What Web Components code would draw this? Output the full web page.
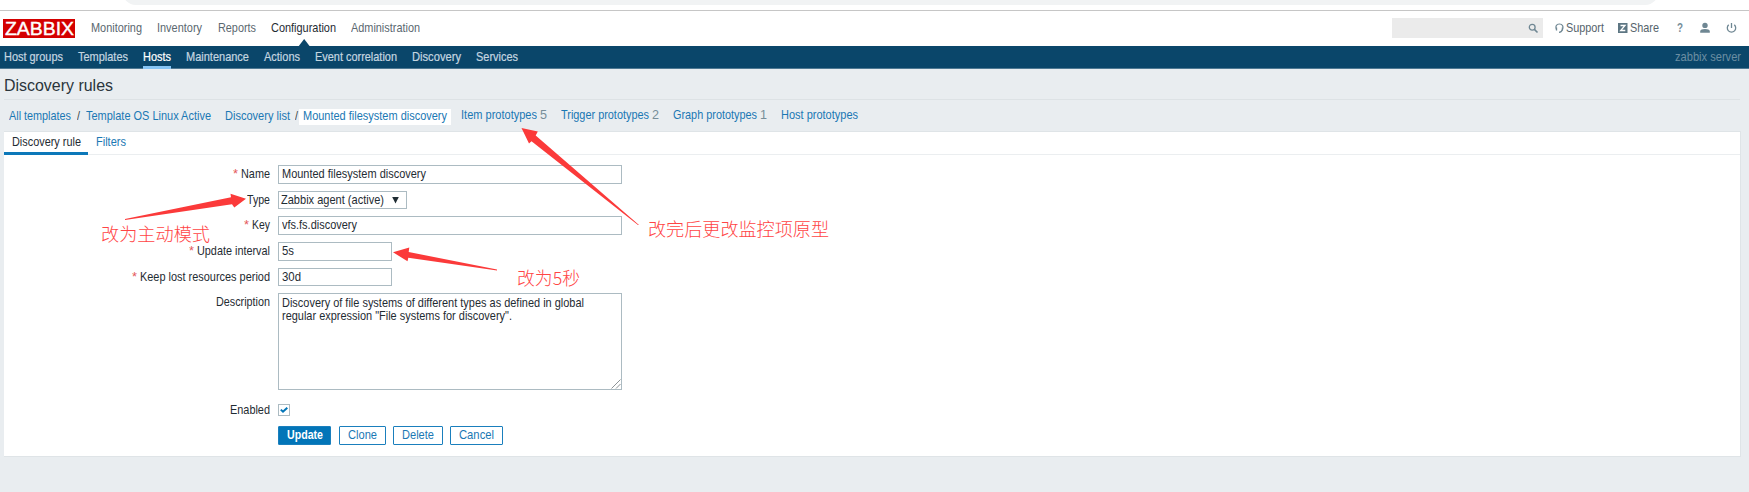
<!DOCTYPE html>
<html lang="en">
<head>
<meta charset="utf-8">
<title>Configuration of discovery rules</title>
<style>
html,body{margin:0;padding:0}
body{width:1749px;height:492px;overflow:hidden;background:#e9edf0;font:12.2px/16px "Liberation Sans",Arial,sans-serif;color:#1f2c33}
</style>
</head>
<body>
<zbx-app></zbx-app>
<script>
/* Single line of text set to an exact measure: w = width, gap = space before it. */
class ZText extends HTMLElement{
  constructor(){
    super();
    this.attachShadow({mode:'open'}).innerHTML='<style>:host{display:block;flex:none;white-space:pre}span{display:inline-block;transform-origin:0 50%}</style><span><slot></slot></span>';
  }
  connectedCallback(){
    const w=+this.getAttribute('w'),s=this.shadowRoot.querySelector('span');
    this.style.marginLeft=(this.getAttribute('gap')||0)+'px';
    if(!w)return;
    s.style.transform='scaleX('+(w/s.getBoundingClientRect().width)+')';
    this.style.width=w+'px';
  }
}
const define=(name,html)=>customElements.define(name,class extends HTMLElement{
  constructor(){super();this.attachShadow({mode:'open'}).innerHTML=html}
});

const registerAll=()=>{
define('zbx-browser-edge',`<style>
:host{display:flow-root;height:10px;background:#fff;border-bottom:1px solid #c6c6c6;overflow:hidden}
div{margin:-20px 91px 0 123px;height:25px;border-radius:13px;background:#f1f3f4}
</style><div></div>`);

define('zbx-header',`<style>
:host{display:flex;height:35px;background:#fff;color:#5b6870;align-items:flex-start}
.logo{margin:8px 0 0 3px;width:72px;height:19px;background:#d40000;color:#fff;font:18.5px/20px "Liberation Sans",Arial,sans-serif;-webkit-text-stroke:.4px #fff}
nav,.tools{display:flex;padding-top:8px;line-height:18px}
.on{color:#1f2c33;position:relative}
.on i{position:absolute;left:31px;top:20px;border:6.5px solid transparent;border-top:0;border-bottom:7px solid #0a466a}
.search{margin:7px 12px 0 auto;width:151px;height:20px;background:#ebebeb;display:flex;align-items:center;justify-content:flex-end}
.search svg{margin-right:4px}
.tools{width:194px;color:#56646c}
svg{display:block;flex:none}
.q{color:#768d99;font-weight:bold}
</style>
<div class="logo"><z-text w="69" gap="2">ZABBIX</z-text></div>
<nav><z-text w="51" gap="16">Monitoring</z-text><z-text w="45" gap="15">Inventory</z-text><z-text w="38" gap="16">Reports</z-text><z-text class="on" w="65" gap="15">Configuration<i></i></z-text><z-text w="69" gap="15">Administration</z-text></nav>
<div class="search"><svg width="11" height="11" viewBox="0 0 11 11" fill="none" stroke="#6f8793" stroke-width="1.3"><circle cx="4.2" cy="4.2" r="2.900"/><path d="M6.4 6.4 9.500 9.500" stroke-width="1.6"/></svg></div>
<div class="tools">
<svg width="9" height="18" viewBox="0 0 9 18" fill="none" stroke="#6f8793" stroke-width="1.2"><path d="M1.6 10.8C.2 8 1.1 5 4.4 5S8.700 8 7.300 10.800Q6.500 13.300 4 13.300"/><path d="M1.500 8.500V11.500M7.400 8.500V11.500" stroke-width="1.300"/></svg>
<z-text w="38" gap="2">Support</z-text>
<svg style="margin-left:14px" width="10" height="18" viewBox="0 0 10 18"><path fill="#5d7683" d="M0 4h9.500v10H0z"/><path d="M2.500 6.500H7L2.700 11.500H7.300" fill="none" stroke="#fff" stroke-width="1.300"/></svg>
<z-text w="29" gap="2">Share</z-text>
<z-text class="q" w="6" gap="18">?</z-text>
<svg style="margin-left:17px" width="10" height="18" viewBox="0 0 10 18" fill="#6f8793"><circle cx="5" cy="6.400" r="2.700"/><path d="M.2 13.700V12Q.6 10 5 10t4.800 2v1.700z"/></svg>
<svg style="margin-left:16px" width="11" height="18" viewBox="0 0 11 18" fill="none" stroke="#6f8793" stroke-width="1.300"><path d="M2.700 5.800a4.200 4.200 0 1 0 5.600 0M5.500 4v5"/></svg>
</div>`);

define('zbx-subnav',`<style>
:host{display:flex;height:22px;background:#0a466a;border-bottom:1px solid #4f7993;color:#c5d6e0;line-height:22px}
.on{color:#fff;height:20px;border-bottom:3px solid #86c5f5}
.srv{margin-left:auto;margin-right:8px;color:#6b8ea3}
z-text{-webkit-text-stroke:.2px currentColor}.srv z-text{-webkit-text-stroke:0}
</style>
<z-text w="59" gap="4">Host groups</z-text><z-text w="50" gap="15">Templates</z-text><z-text class="on" w="28" gap="15">Hosts</z-text><z-text w="63" gap="15">Maintenance</z-text><z-text w="36" gap="15">Actions</z-text><z-text w="82" gap="15">Event correlation</z-text><z-text w="49" gap="15">Discovery</z-text><z-text w="42" gap="15">Services</z-text>
<div class="srv"><z-text w="66">zabbix server</z-text></div>`);

define('zbx-title',`<style>
:host{display:block;margin:0 9px 0 4px;height:30px;border-bottom:1px solid #dde2e5;font-size:16.500px;line-height:32px;color:#2b353b}
</style><z-text w="109">Discovery rules</z-text>`);

define('zbx-crumbs',`<style>
:host{display:flex;height:31px;padding-top:8px;box-sizing:border-box;line-height:17px;color:#1a78b4}
.s{color:#3a444a}
.cur{background:#fff;width:152px;height:16px;margin:1px 0 0 1px;line-height:15px}
.up{display:flex;line-height:15px}
.n{color:#768d99}
</style>
<z-text w="62" gap="9">All templates</z-text><z-text class="s" w="3" gap="6">/</z-text><z-text w="125" gap="6">Template OS Linux Active</z-text><z-text w="65" gap="14">Discovery list</z-text><z-text class="s" w="3" gap="5">/</z-text>
<div class="cur"><z-text w="144" gap="4">Mounted filesystem discovery</z-text></div>
<div class="up"><z-text w="76" gap="10">Item prototypes</z-text><z-text class="n" w="7" gap="3">5</z-text><z-text w="88" gap="14">Trigger prototypes</z-text><z-text class="n" w="7" gap="3">2</z-text><z-text w="84" gap="14">Graph prototypes</z-text><z-text class="n" w="7" gap="3">1</z-text><z-text w="77" gap="14">Host prototypes</z-text></div>`);

define('zbx-tabs',`<style>
:host{display:flex;height:22px;border-bottom:1px solid #ebeef0;line-height:20px;color:#1a78b4}
.on{width:84px;height:20px;border-bottom:3px solid #0c78b9;color:#1f2c33}
</style><div class="on"><z-text w="69" gap="8">Discovery rule</z-text></div><z-text w="30" gap="8">Filters</z-text>`);

define('zbx-row',`<style>
:host{display:flex;height:18.600px;line-height:18px}
.l{width:266px;display:flex;justify-content:flex-end;margin-right:8px}
</style><div class="l"><slot name="label"></slot></div><slot></slot>`);

define('zbx-field',`<style>
:host{display:flex;box-sizing:border-box;width:344px;height:18.600px;border:1px solid #acbbc2;line-height:16px;background:#fff;padding-left:3px;position:relative}
:host([short]){width:114px}
:host([select]){width:129px;padding-left:2px}
:host([area]){display:block;height:97px;line-height:13px;padding-top:3px}
</style><slot></slot>`);

define('zbx-button',`<style>
:host{display:flex;justify-content:center;box-sizing:border-box;height:19px;border:1px solid #1a7fbd;border-radius:1px;line-height:17px;color:#1a78b4;background:#fff}
:host([main]){background:#0275b8;color:#fff;font-weight:bold}
</style><slot></slot>`);

define('zbx-form',`<style>
:host{display:flex;flex-direction:column;gap:7px;padding-top:10.300px}
.r{color:#e45959}
zbx-row[tall]{height:97px}
.grip{position:absolute;right:0;bottom:0}
.cb{box-sizing:border-box;width:12px;height:12px;border:1px solid #acbbc2;margin-top:3px}
.cb svg{display:block}
.btns{display:flex;margin:-1px 0 0 274px}
</style>
<zbx-row><z-text slot="label" class="r" w="5">*</z-text><z-text slot="label" w="29" gap="3">Name</z-text><zbx-field><z-text w="144" gap="0">Mounted filesystem discovery</z-text></zbx-field></zbx-row>
<zbx-row><z-text slot="label" w="23">Type</z-text><zbx-field select><z-text w="103">Zabbix agent (active)</z-text><svg style="margin-left:8px" width="7" height="16" viewBox="0 0 7 16"><path d="M.2 5h6.600L3.500 11.500z" fill="#1f2c33"/></svg></zbx-field></zbx-row>
<zbx-row><z-text slot="label" class="r" w="5">*</z-text><z-text slot="label" w="18" gap="3">Key</z-text><zbx-field><z-text w="75">vfs.fs.discovery</z-text></zbx-field></zbx-row>
<zbx-row><z-text slot="label" class="r" w="5">*</z-text><z-text slot="label" w="73" gap="3">Update interval</z-text><zbx-field short><z-text w="12">5s</z-text></zbx-field></zbx-row>
<zbx-row><z-text slot="label" class="r" w="5">*</z-text><z-text slot="label" w="130" gap="3">Keep lost resources period</z-text><zbx-field short><z-text w="19">30d</z-text></zbx-field></zbx-row>
<zbx-row tall><z-text slot="label" w="54">Description</z-text><zbx-field area><z-text w="302">Discovery of file systems of different types as defined in global</z-text><z-text w="230">regular expression "File systems for discovery".</z-text><svg class="grip" width="10" height="10" viewBox="0 0 10 10" stroke="#70777b" stroke-width=".8"><path d="M.5 9.500 9.500.5M5 9.500 9.500 5"/></svg></zbx-field></zbx-row>
<zbx-row style="margin-top:4px"><z-text slot="label" w="40">Enabled</z-text><div class="cb"><svg width="10" height="10" viewBox="0 0 10 10" fill="none" stroke="#0275b8" stroke-width="2"><path d="M1.800 4.600 4 6.700 8.300 2.700"/></svg></div></zbx-row>
<div class="btns"><zbx-button main style="width:53px"><z-text w="36">Update</z-text></zbx-button><zbx-button style="width:47px;margin-left:8px"><z-text w="29">Clone</z-text></zbx-button><zbx-button style="width:50px;margin-left:7px"><z-text w="32">Delete</z-text></zbx-button><zbx-button style="width:53px;margin-left:7px"><z-text w="35">Cancel</z-text></zbx-button></div>`);

/* Red hand-placed notes lying over the page. */
define('zbx-notes',`<style>
:host{position:absolute;left:0;top:0;width:1749px;height:492px;color:#ff4545;font:300 18px/24px "Noto Sans CJK SC",sans-serif}
svg{display:block}
z-text{position:absolute}
</style>
<svg width="1749" height="492" fill="#fb3a3a"><path d="M521.500 128 537.800 131.500 535.700 135.500 639 225 638 225 531.500 141.300 529 143.500z"/><path d="M246 198.700 230.500 193.700 231 197.300 125 219 125 220 232 204.200 234.300 207.500z"/><path d="M393 252.300 409.300 247.500 408.700 252 497 269.600 497 270.400 408.300 257.700 407.500 261.200z"/></svg>
<z-text w="109" style="left:101px;top:221px">改为主动模式</z-text>
<z-text w="181" style="left:648px;top:216px">改完后更改监控项原型</z-text>
<z-text w="63" style="left:517px;top:265px">改为5秒</z-text>`);

define('zbx-app',`<style>
:host{display:block;position:relative;width:1749px;height:492px;overflow:hidden}
main{margin:0 0 0 4px;height:324px;background:#fff;border:1px solid #dfe4e7;border-left:0;width:1736px}
</style>
<zbx-browser-edge></zbx-browser-edge><zbx-header></zbx-header><zbx-subnav></zbx-subnav><zbx-title></zbx-title><zbx-crumbs></zbx-crumbs>
<main><zbx-tabs></zbx-tabs><zbx-form></zbx-form></main>
<zbx-notes></zbx-notes>`);
};
registerAll();
customElements.define('z-text',ZText);
</script>
</body>
</html>
